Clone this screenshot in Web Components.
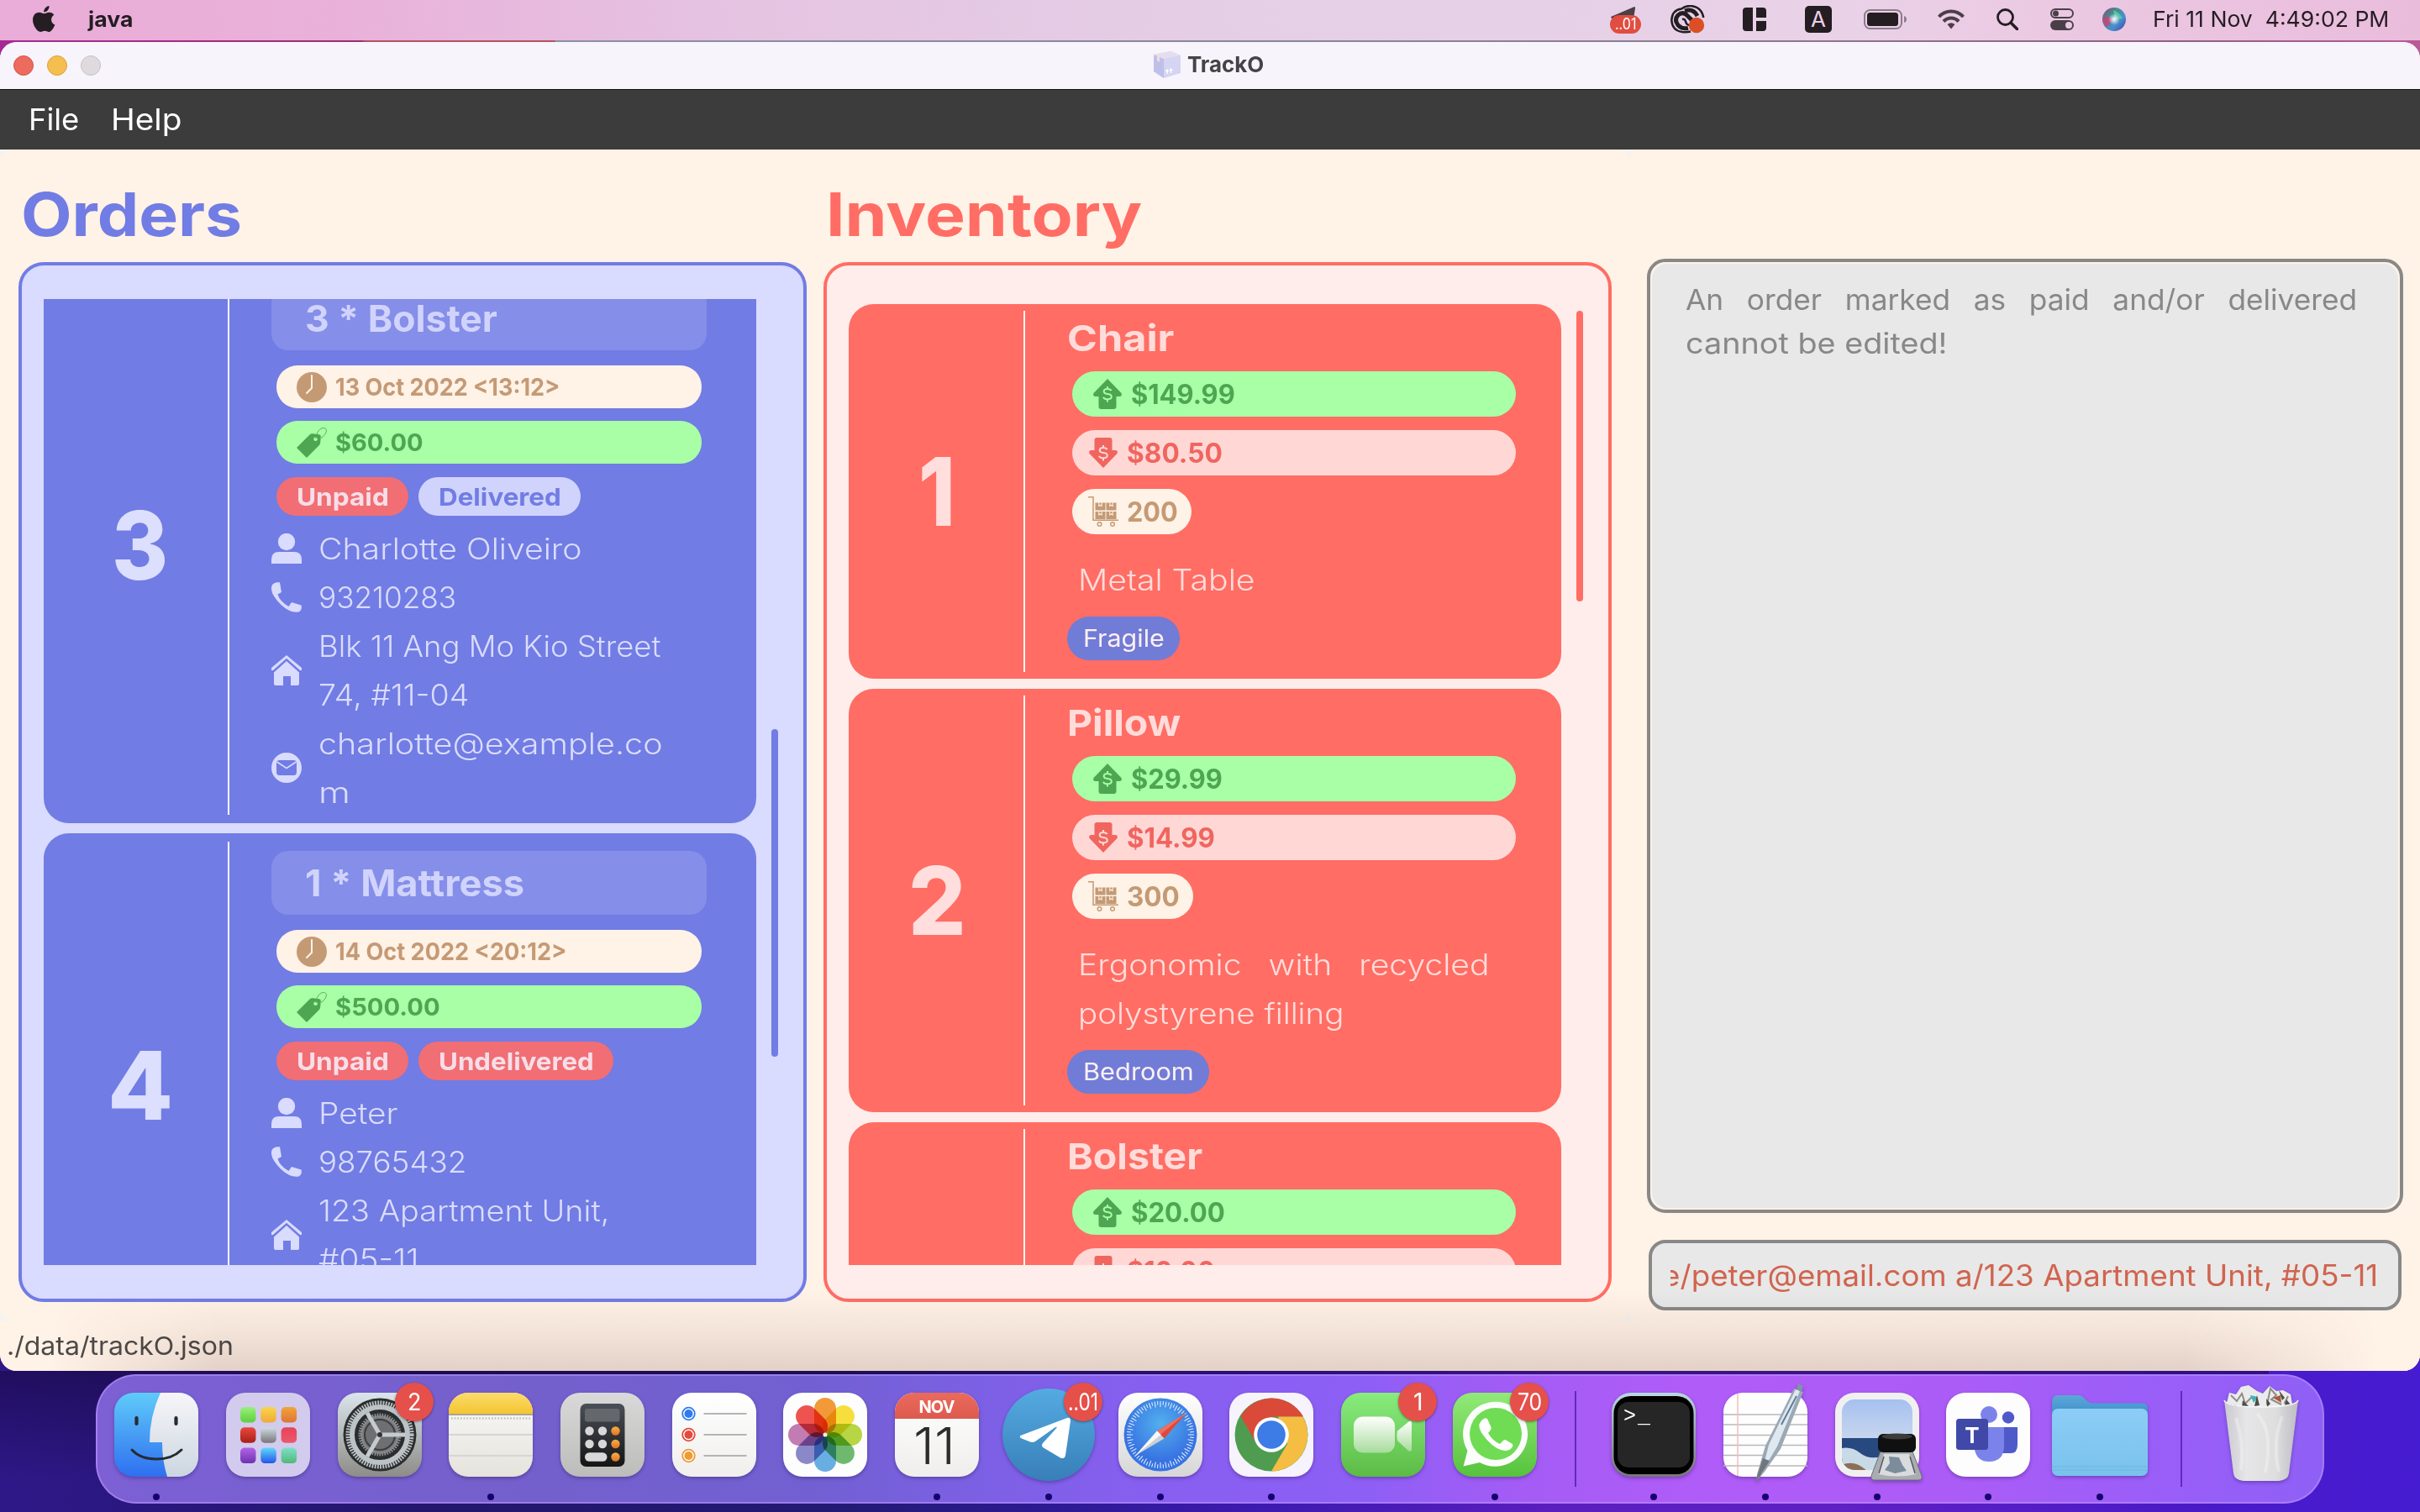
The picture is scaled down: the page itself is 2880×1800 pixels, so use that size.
<!DOCTYPE html>
<html lang="en">
<head>
<meta charset="utf-8">
<title>TrackO</title>
<style>
html,body{margin:0;padding:0}
body{width:2880px;height:1800px;overflow:hidden;font-family:Inter,"Liberation Sans",sans-serif;background:#2a1580}
</style>
</head>
<body>
<desk-top></desk-top>
<script>
const define = (name, html, after) => customElements.define(name, class extends HTMLElement {
  constructor() {
    super();
    this.attachShadow({mode: "open"});
  }
  connectedCallback() {
    if (this.shadowRoot.childNodes.length) return;
    const t = document.createElement("template");
    t.innerHTML = typeof html === "function" ? html(this) : html;
    this.shadowRoot.append(t.content.cloneNode(true));
    customElements.upgrade(this.shadowRoot);
    if (after) after(this);
  }
});
const a = (el, n, d = "") => el.getAttribute(n) ?? d;

/* One line of text stretched or condensed so that it spans a given width.
   With "first", the first word gets that width and the word gaps take up the rest. */
define("fit-text", `<style>
:host{display:block;white-space:nowrap;flex:none}
span{display:inline-block;white-space:pre;transform-origin:0 50%}
</style><span><slot></slot></span>`, el => {
  const span = el.shadowRoot.querySelector("span");
  const fs = parseFloat(getComputedStyle(el).fontSize);
  const w = +a(el, "w"), text = el.textContent, bear = 0.09 * fs;
  if (!w) return;
  const nat = span.getBoundingClientRect().width;
  const first = +a(el, "first");
  let k;
  if (first) {
    const c = document.createElement("canvas").getContext("2d");
    const cs = getComputedStyle(el);
    c.font = `${cs.fontWeight} ${cs.fontSize} ${cs.fontFamily}`;
    k = first / (c.measureText(text.split(" ")[0]).width - bear);
    span.style.wordSpacing = (w / k + bear - nat) / (text.split(" ").length - 1) + "px";
  } else {
    k = w / (nat - bear);
  }
  el.style.width = w + "px";
  span.style.marginLeft = (-0.03 * fs) + "px";
  span.style.transform = `scaleX(${k})`;
});

const G = {
  person: `<circle cx="18" cy="10" r="10.2"/><path d="M0 36v-5q0-9 9-9h18q9 0 9 9v5z"/>`,
  phone: `<path d="M3 1.500Q6-.3 10 .3L12 12 7.500 14.500Q10 23 20.500 29L24 24 35.500 27.500Q37 33 32.500 35.500 22 37 11.500 27-2 14 .3 5 .8 2.700 3 1.500z"/>`,
  home: `<path d="M18 0 36 15v3h-2L18 3.800 2 18H0v-3z"/><path d="M18 7 33 20.500V34q0 2-2 2h-8V25h-9v11H5q-2 0-2-2V20.500z"/>`,
  mail: `<path fill-rule="evenodd" d="M18 0a18 18 0 1 1 0 36 18 18 0 0 1 0-36zM9.500 9Q6 9 6 12.500V23q0 4 3.500 4h17q3.500 0 3.500-4V12.500Q30 9 26.500 9z"/><path d="m6.500 11 11.500 7.500L29.500 11" fill="none" stroke="currentColor" stroke-width="1.500"/>`,
  clock: `<circle cx="18" cy="18" r="18"/><path d="M18 4v15l-6 6" fill="none" stroke="#fff2e6" stroke-width="2" stroke-linecap="round"/>`,
  tag: `<path fill-rule="evenodd" d="m0 24 15.500-15.500Q17 7 19.500 7.300l7 .9q2.500.3 2.300 2.800l-.6 7q-.2 2-1.500 3.200L12 36zM22.500 11.500a2.300 2.300 0 1 0 .1 0z"/><path d="M23 13c0-7 5-13 9.500-12.500s4 7-3.500 12" fill="none" stroke="currentColor" stroke-width=".9"/>`,
  up: `<path d="M18 0 34.500 17Q36 21 32 21h-3.500v12q0 3-3 3h-15q-3 0-3-3V21H4Q0 21 1.500 17z"/>`,
  down: `<path d="M18 36 34.500 19Q36 15 32 15h-3.500V3q0-3-3-3h-15q-3 0-3 3v12H4Q0 15 1.500 19z"/>`,
  cart: `<path d="M0 .8h6v27.500h30" fill="none" stroke="currentColor" stroke-width="1.500"/><path fill-rule="evenodd" d="M8.500 7.500h12v9h-12zM21.500 7.500h12v9h-12zM8.500 18h12v9h-12zM21.500 18h12v9h-12zM12.300 7.500v5l2.200-1.500 2.200 1.500v-5h-1v3l-1.200-1-1.200 1v-3zM25.300 7.500v5l2.200-1.500 2.200 1.500v-5h-1v3l-1.200-1-1.200 1v-3zM12.300 18v5l2.200-1.500 2.200 1.500v-5h-1v3l-1.200-1-1.200 1v-3zM25.300 18v5l2.200-1.500 2.200 1.500v-5h-1v3l-1.200-1-1.200 1v-3z"/><g fill="none" stroke="currentColor" stroke-width="1.400"><circle cx="13.500" cy="33" r="2.300"/><circle cx="29" cy="33" r="2.300"/></g>`
};
const dollar = bg => `<path d="M22.500 14.200q-1-2.200-4.500-2.200-4.300 0-4.300 3 0 2.600 4.300 3 4.800.5 4.800 3.300 0 3-4.800 3-4 0-5-2.500M18 9v3m0 12.500v3" fill="none" stroke="${bg}" stroke-width="2"/>`;
define("glyph-icon", el => {
  const n = a(el, "name");
  return `<style>:host{display:block;flex:none;width:36px;height:36px}svg{display:block}</style>
<svg width="36" height="36" viewBox="0 0 36 36" fill="currentColor">${G[n]}${n === "up" ? dollar("#a8ffa6") : n === "down" ? dollar("#ffd8d6") : ""}</svg>`;
});

/* ---------- orders ---------- */
define("contact-row", el => `<style>
:host{display:flex;align-items:center;color:#d9dbff;font-size:35px;font-weight:350;line-height:58px}
.t{margin-left:21px;color:#dadcfc}
</style><glyph-icon name="${a(el, "icon")}"></glyph-icon><div class="t"><slot></slot></div>`);

define("info-pill", el => `<style>
:host{display:flex;align-items:center;box-sizing:border-box;font-weight:700}
glyph-icon{margin-right:11px}
</style>${a(el, "icon") ? `<glyph-icon name="${a(el, "icon")}"></glyph-icon>` : ""}<slot></slot>`);

define("order-card", el => {
  const red = a(el, "state") === "Undelivered";
  return `<style>
:host{display:flex;background:#717ce4;border-radius:30px;box-sizing:border-box;width:848px;min-height:602px;flex:none;margin-bottom:12px}
.n{width:219px;display:flex;align-items:center;justify-content:center;color:#dcdffd;font-size:113px;font-weight:800;box-sizing:border-box;padding-left:8px}
.n fit-text{margin-top:-3px}
.line{width:2px;background:#fff;margin:10px 0}
.b{padding:21px 0 8px 50px;display:flex;flex-direction:column}
.item{width:518px;height:76px;box-sizing:border-box;border-radius:20px;background:#858ee8;display:flex;align-items:center;padding-left:41px;font-size:44px;font-weight:700;color:#d0d3fc}
info-pill{height:51px;border-radius:25px;margin-left:6px;width:506px;padding-left:24px;font-size:29px}
.d{background:#fff2e6;margin-top:18px;color:#c49a75}
.p{background:#a8ffa6;margin-top:15px;color:#4ea652}
.s{display:flex;margin:16px 0 10px;gap:12px}
.s info-pill{height:46px;width:auto;padding:0 25px}
.s info-pill+info-pill{margin-left:0}
.r{background:#f16e74;color:#f7dee8}
.v{background:#d0d3fc;color:#717ce4}
</style>
<div class="n"><fit-text w="${a(el, "nw")}">${a(el, "n")}</fit-text></div><div class="line"></div>
<div class="b">
<div class="item"><fit-text w="${a(el, "iw")}">${a(el, "item")}</fit-text></div>
<info-pill class="d" icon="clock"><fit-text w="${a(el, "dw")}">${a(el, "date").replace(/</g, "&lt;").replace(/>/g, "&gt;")}</fit-text></info-pill>
<info-pill class="p" icon="tag"><fit-text w="${a(el, "pw")}">${a(el, "price")}</fit-text></info-pill>
<div class="s"><info-pill class="r"><fit-text w="107">Unpaid</fit-text></info-pill><info-pill class="${red ? "r" : "v"}"><fit-text w="${red ? 182 : 143}">${a(el, "state")}</fit-text></info-pill></div>
<slot></slot>
</div>`;
});

/* ---------- inventory ---------- */
define("stock-card", el => `<style>
:host{display:flex;background:#ff6d64;border-radius:30px;box-sizing:border-box;width:848px;min-height:446px;flex:none;margin-bottom:12px}
.n{width:208px;display:flex;align-items:center;justify-content:center;color:#ffdedd;font-size:113px;font-weight:800}
.line{width:2px;background:#fff;margin:8px 0}
.b{padding:11px 0 22px 50px;display:flex;flex-direction:column;align-items:flex-start}
.name{font-size:43px;font-weight:700;color:#ffdcda;line-height:58px;margin-left:1px}
info-pill{height:54px;border-radius:27px;margin:0 0 16px 6px;width:528px;font-size:32px;padding-left:19px}
.u{background:#a8ffa6;color:#4ea652;padding-left:24px;margin-top:11px}
.w{background:#ffd8d6;color:#f1655f}
.q{background:#fff2e6;color:#c49a75;width:auto;padding-right:18px;margin-bottom:25px}
.desc{font-size:35px;font-weight:350;line-height:58px;color:#ffdcda;margin-left:14px}
.tag{margin-top:15px;height:52px;border-radius:26px;background:#717cd6;color:#fdf0f4;font-size:28px;display:flex;align-items:center;padding:0 20px}
</style>
<div class="n">${a(el, "n") ? `<fit-text w="${a(el, "numw")}">${a(el, "n")}</fit-text>` : ""}</div><div class="line"></div>
<div class="b">
<fit-text class="name" w="${a(el, "nw")}">${a(el, "name")}</fit-text>
<info-pill class="u" icon="up"><fit-text w="${a(el, "uw")}">${a(el, "up")}</fit-text></info-pill>
<info-pill class="w" icon="down"><fit-text w="${a(el, "ww")}">${a(el, "down")}</fit-text></info-pill>
${a(el, "qty") ? `<info-pill class="q" icon="cart"><fit-text w="${a(el, "qw", "58")}">${a(el, "qty")}</fit-text></info-pill>
<div class="desc"><slot></slot></div>
<div class="tag"><fit-text w="${a(el, "tw")}">${a(el, "tag")}</fit-text></div>` : ""}
</div>`);

define("list-panel", el => `<style>
:host{display:block;width:938px;color:var(--c)}
.h{font-size:71px;font-weight:700;height:134px;line-height:155px;box-sizing:border-box;padding-left:5px}
.box{box-sizing:border-box;width:938px;height:1238px;border:4px solid var(--c);border-radius:30px;background:var(--bg);padding:40px 0 0 26px;display:flex}
.view{width:848px;height:1150px;overflow:hidden;display:flex;flex-direction:column}
.in{margin-top:var(--off)}
.bar{width:8px;border-radius:4px;background:var(--c);margin:var(--sy) 0 0 18px;height:var(--sh)}
</style>
<div class="h"><fit-text w="${a(el, "hw")}">${a(el, "heading")}</fit-text></div>
<div class="box"><div class="view"><div class="in"><slot></slot></div></div><div class="bar"></div></div>`);

/* ---------- menu bar ---------- */
define("menu-bar", `<style>
:host{display:flex;height:48px;align-items:center;background:linear-gradient(90deg,#eaacd8 0,#e9b1da 400px,#e5c4e2 900px,#e4cfe6 1500px,#e9d2e8 2200px,#ebcae3 2400px,#eabcdc 2880px);color:#241d22;font-size:26px;line-height:44px;padding:0 38px 2px 39px;box-sizing:border-box}
svg{display:block;flex:none}
.j{font-weight:700;margin:0 0 0 40px;font-size:25px}
.sp{flex:1}
.tg{position:relative}
.bd{position:absolute;left:0;top:11px;width:37px;height:22px;border-radius:11px;background:#e14d40;color:#fff;font-size:18px;line-height:22px;display:flex;justify-content:center}
.A{width:32px;height:32px;border-radius:5px;background:#241d22;color:#e9d2e8;display:flex;align-items:center;justify-content:center;margin-right:38px;font-size:26px;line-height:32px}
</style>
<svg width="27" height="32" viewBox="0 0 27 32"><path fill="#241d22" d="M19.500 0c.4 4-2.700 7.400-6.200 7.500C12.800 4 16 .4 19.500 0zM13.700 9.200c1.500 0 3.200-1.600 6-1.500 2.500.1 4.400 1.200 5.600 3-4.800 3-4 9.700 1 11.700-1 3-4 8.400-7 8.500-2 .1-2.700-1.200-5.200-1.200S11 31 9 31C5.500 31 0 23.500 0 16.800 0 11 3.600 7.900 7.400 7.800c2.600 0 4.800 1.500 6.300 1.400z"/></svg>
<fit-text class="j" w="51">java</fit-text><div class="sp"></div>
<div class="tg" style="margin-right:35px"><svg width="37" height="32" viewBox="0 0 37 32"><path fill="#4a4048" d="M1 13 29 1q1.500 0 1 2l-3 18H14V14L2 15z"/></svg><div class="bd"><fit-text w="24">..01</fit-text></div></div>
<svg width="42" height="34" viewBox="0 0 42 34" style="margin-right:44px"><g fill="none" stroke="#241d22"><path d="M24 31.500Q20 32.500 14 32 2 30.500 1.300 18 2 6 13 4.500 18 .8 24 1q13 1 15.300 14" stroke-width="2.500"/><path d="M21 27.500Q14 29 9 24 4 17.500 9 12q5.500-5 11 .5l6 6" stroke-width="5"/><path d="M17 7q10-3.500 15 6" stroke-width="5"/><path d="M14 17q3-1 4 2.500 1 4 4 4.500" stroke-width="2.500"/></g><circle cx="31" cy="24" r="9.200" fill="#dc4f26"/></svg>
<svg width="28" height="28" viewBox="0 0 28 28" style="margin-right:46px"><path fill="#241d22" d="M4 0h8v28H4q-4 0-4-4V4q0-4 4-4zM16 0h8q4 0 4 4v8H16zM16 16h12v8q0 4-4 4h-8z"/></svg>
<div class="A">A</div>
<svg width="52" height="24" viewBox="0 0 52 24" style="margin-right:36px"><rect x="1" y="1" width="44" height="22" rx="6.500" fill="none" stroke="#8b7d8a" stroke-width="2"/><rect x="4" y="4" width="37" height="16" rx="3.500" fill="#241d22"/><path d="M48 8q3 1 3 4t-3 4z" fill="#8b7d8a"/></svg>
<svg width="32" height="24" viewBox="0 0 32 24" style="margin-right:38px"><g fill="none" stroke="#4a3f48" stroke-width="4"><path d="M1.500 9q6-6.500 14.500-6.500T30.500 9"/><path d="M7 14.500q3.800-4 9-4t9 4"/></g><path fill="#4a3f48" d="M11.500 18q4.500-3.500 9 0L16 23.500z"/></svg>
<svg width="26" height="26" viewBox="0 0 26 26" style="margin-right:38px"><circle cx="10.500" cy="10.500" r="9" fill="none" stroke="#241d22" stroke-width="2.800"/><path d="m17 17 7.500 7.500" stroke="#241d22" stroke-width="3.500" stroke-linecap="round"/></svg>
<svg width="28" height="26" viewBox="0 0 28 26" style="margin-right:34px"><rect x="1" y="1" width="26" height="10" rx="5" fill="none" stroke="#4a3f48" stroke-width="2"/><circle cx="6.500" cy="6" r="3.500" fill="#4a3f48"/><rect y="14" width="28" height="12" rx="6" fill="#4a3f48"/><circle cx="22" cy="20" r="4" fill="#ebc8e2"/></svg>
<svg width="28" height="28" viewBox="0 0 28 28" style="margin-right:33px"><defs><linearGradient id="s" x2="1" y2="1"><stop stop-color="#a03a86"/><stop offset=".35" stop-color="#3f8f8c"/><stop offset=".65" stop-color="#4a8fd0"/><stop offset="1" stop-color="#3a3f9a"/></linearGradient><radialGradient id="r"><stop stop-color="#fff"/><stop offset="1" stop-color="#fff" stop-opacity="0"/></radialGradient></defs><circle cx="14" cy="14" r="14" fill="url(#s)"/><path d="M1 12q6-3 12 2-4 7-9 9-4-5-3-11z" fill="#cf3f7a" opacity=".8"/><path d="M13 3q8 3 11 10l-9 1z" fill="#5fd0a8" opacity=".8"/><circle cx="14" cy="14" r="7" fill="url(#r)"/></svg>
<fit-text w="279">Fri 11 Nov&nbsp; 4:49:02 PM</fit-text>`);

/* ---------- application window ---------- */
define("app-window", `<style>
:host{display:flex;flex-direction:column;height:1582px;border-radius:20px;overflow:hidden;background:#f3f3f3;position:relative}
.title{height:56px;background:#f8f4fb;border-bottom:1px solid #17151a;display:flex;align-items:center;box-sizing:border-box;height:57px;padding-bottom:3px;justify-content:center;position:relative}
.lights{position:absolute;left:16px;top:16px;display:flex;gap:16px}
.lights i{width:24px;height:24px;border-radius:50%;box-sizing:border-box;border:1px solid #d35548;background:#ed6a5e}
.lights i+i{background:#f5bf4f;border-color:#d8a03c}
.lights i+i+i{background:#dedade;border-color:#c5c1c5}
.title svg{margin-left:-4px}
.title fit-text{font-size:26px;font-weight:700;color:#454347;margin-left:9px}
.menu{height:71px;background:#3c3c3c;color:#fff;display:flex;align-items:center;padding:0 0 2px 35px;box-sizing:border-box;gap:41px;font-size:36px}
.main{flex:1;display:flex;background:linear-gradient(#fff2e6,#fff2e6) right/940px 100% no-repeat}
.left{width:1940px;height:1394px;background:#fff2e6;border-radius:14px;display:flex;padding-left:22px;gap:20px;box-sizing:border-box}
.right{padding:130px 0 0 20px;display:flex;flex-direction:column}
.res{width:900px;height:1136px;box-sizing:border-box;border:4px solid #888;border-radius:22px;background:#fff2e6;padding:2px}
.res div{height:100%;border-radius:18px;background:#e8e8e8;box-sizing:border-box;padding:17px 0 0 41px;font-size:34px;line-height:52px;color:#888}
.cmd{margin:32px 0 0 2px;width:896px;height:84px;box-sizing:border-box;border:4px solid #888;border-radius:20px;background:#e8e8e8;display:flex;align-items:center;padding:0 22px;font-size:35px;color:#d0644f}
.cmd div{overflow:hidden;flex:1;display:flex;line-height:60px}
.cmd fit-text{margin-left:-9px}
.status{height:60px;display:flex;align-items:center;margin-top:-60px;padding-left:9px;font-size:30px;color:#4c4a48;box-sizing:border-box;position:relative;background:#fff2e6}
.shade{position:absolute;left:0;right:0;bottom:0;height:96px;background:linear-gradient(transparent,rgba(70,25,30,.055) 45%,rgba(70,25,30,.15));-webkit-mask-image:linear-gradient(90deg,transparent 60px,#000 260px,#000 2600px,transparent 2830px);mask-image:linear-gradient(90deg,transparent 60px,#000 260px,#000 2600px,transparent 2830px)}
</style>
<div class="title"><div class="lights"><i></i><i></i><i></i></div>
<svg width="32" height="32" viewBox="0 0 32 32"><path d="M0 4 20 0l12 5v21l-20 6L0 24z" fill="#d5d4f3"/><path d="m0 4 12 5v23L0 24z" fill="#bfc0ea"/><path d="M0 4 20 0l12 5-20 4z" fill="#dfdff6"/><path d="m4 5.500 20-4 3 1.300-20 4v6l-3-1.500z" fill="#f5d9dd"/><path d="M16 27v-5m-1.500 2 1.500-2 1.500 2M20.500 26v-5m-1.500 2 1.500-2 1.500 2" stroke="#fff" stroke-width="1.300" fill="none"/></svg>
<fit-text w="89">TrackO</fit-text></div>
<div class="menu"><fit-text w="57">File</fit-text><fit-text w="81">Help</fit-text></div>
<div class="main"><div class="left">
<list-panel heading="Orders" hw="256" style="--c:#717ce4;--bg:#d9dbff;--off:-36px;--sy:512px;--sh:390px">
<order-card n="3" nw="58" item="3 * Bolster" iw="225" date="13 Oct 2022 <13:12>" dw="265" price="$60.00" pw="102" state="Delivered">
<contact-row icon="person"><fit-text w="310">Charlotte Oliveiro</fit-text></contact-row>
<contact-row icon="phone"><fit-text w="161">93210283</fit-text></contact-row>
<contact-row icon="home"><fit-text w="404">Blk 11 Ang Mo Kio Street</fit-text><fit-text w="176">74, #11-04</fit-text></contact-row>
<contact-row icon="mail"><fit-text w="406">charlotte@example.co</fit-text><fit-text w="34">m</fit-text></contact-row>
</order-card>
<order-card n="4" nw="68" item="1 * Mattress" iw="257" date="14 Oct 2022 <20:12>" dw="273" price="$500.00" pw="122" state="Undelivered">
<contact-row icon="person"><fit-text w="91">Peter</fit-text></contact-row>
<contact-row icon="phone"><fit-text w="173">98765432</fit-text></contact-row>
<contact-row icon="home"><fit-text w="343">123 Apartment Unit,</fit-text><fit-text w="116">#05-11</fit-text></contact-row>
</order-card>
</list-panel>
<list-panel heading="Inventory" hw="369" style="--c:#ff6d64;--bg:#ffedeb;--off:6px;--sy:14px;--sh:346px">
<stock-card n="1" numw="35" name="Chair" nw="123" up="$149.99" uw="121" down="$80.50" ww="111" qty="200" tag="Fragile" tw="94"><fit-text w="207">Metal Table</fit-text></stock-card>
<stock-card n="2" numw="59" name="Pillow" nw="131" up="$29.99" uw="106" down="$14.99" ww="102" qty="300" qw="60" tag="Bedroom" tw="129"><fit-text w="486" first="191">Ergonomic with recycled</fit-text><fit-text w="313">polystyrene filling</fit-text></stock-card>
<stock-card name="Bolster" nw="157" up="$20.00" uw="109" down="$10.00" ww="102"></stock-card>
</list-panel>
</div><div class="right">
<div class="res"><div><fit-text w="796" first="42">An order marked as paid and/or delivered</fit-text><fit-text w="308">cannot be edited!</fit-text></div></div>
<div class="cmd"><div><fit-text w="849">e/peter@email.com a/123 Apartment Unit, #05-11</fit-text></div></div>
</div></div>
<div class="status"><fit-text w="267">./data/trackO.json</fit-text></div>
<div class="shade"></div>`);

/* ---------- dock ---------- */
const range = (n, f) => Array.from({length: n}, (_, i) => f(i)).join("");
const sq = (fill, o = "") => `<rect width="100" height="100" rx="23" fill="${fill}" ${o}/>`;
const lg = (id, c1, c2, x = "") => `<linearGradient id="${id}" x2="0" y2="1" ${x}><stop stop-color="${c1}"/><stop offset="1" stop-color="${c2}"/></linearGradient>`;
const APPS = {
finder: `<defs>${lg("a", "#5fcbf9", "#2f6ff0")}${lg("b", "#f7f6fa", "#ccd6e0")}<clipPath id="c"><rect width="100" height="100" rx="23"/></clipPath></defs><g clip-path="url(#c)"><rect width="100" height="100" fill="url(#a)"/><path d="M55 0Q42 28 42 59h15q0 22 6 41h37V0z" fill="url(#b)"/></g><g stroke="#262b33" stroke-linecap="round" fill="none"><path d="M26.500 30v7M73.500 30v7" stroke-width="4.200"/><path d="M21 68q10 11 29 11t30-11" stroke-width="3"/></g>`,
launch: `${sq("#d2cbed")}${[["#9af07a", "#5ccf3e"], ["#f9d54a", "#f0a93c"], ["#f0a53a", "#de7436"], ["#e8483c", "#a81f18"], ["#cfdbe4", "#767676"], ["#e8425c", "#ea5a68"], ["#b263e6", "#6f31b0"], ["#5ed8fa", "#2455e8"], ["#7fdfc8", "#4fb878"]].map((c, i) => `<defs>${lg("l" + i, c[0], c[1])}</defs><rect x="${17 + i % 3 * 24.300}" y="${17 + (i / 3 | 0) * 24.300}" width="18.500" height="18.500" rx="5" fill="url(#l${i})"/>`).join("")}`,
settings: `<defs>${lg("g", "#dbe5ec", "#8d8c88")}</defs>${sq("url(#g)")}<circle cx="50" cy="50" r="43.500" fill="#2b2d2e"/><circle cx="50" cy="50" r="38" fill="none" stroke="#b9bfc2" stroke-width="5" stroke-dasharray="1.900 1.300"/><circle cx="50" cy="50" r="33" fill="none" stroke="#bcc3c6" stroke-width="6"/><circle cx="50" cy="50" r="23" fill="#77797a" stroke="#8d9193" stroke-width="5" stroke-dasharray="1.600 1.300"/><circle cx="50" cy="50" r="18" fill="#6d6f70" stroke="#3b3d3e" stroke-width="2"/><path d="M50 50h30M50 50 35 24M50 50 35 76" stroke="#c5cbce" stroke-width="5"/><circle cx="50" cy="50" r="3" fill="#333"/>`,
notes: `<defs>${lg("n", "#f9f9f8", "#e4e3dc")}${lg("m", "#fbdc6c", "#f4c431")}<clipPath id="c"><rect width="100" height="100" rx="23"/></clipPath></defs><g clip-path="url(#c)"><rect width="100" height="100" fill="url(#n)"/><rect width="100" height="25" fill="url(#m)"/><path d="M0 26h100" stroke="#a9a692" stroke-width="2"/><path d="M3 30.500h96" stroke="#b5b4b2" stroke-width="2" stroke-dasharray="1.500 2.200"/><path d="M0 50h100M0 75h100" stroke="#cfcecd" stroke-width="1.600"/></g>`,
calc: `<defs>${lg("n", "#d9d9d9", "#bcbcba")}${lg("k", "#4a5058", "#151515")}${lg("o", "#f7ad4c", "#e0761e")}</defs>${sq("url(#n)")}<rect x="23.500" y="13" width="53" height="75" rx="7" fill="url(#k)"/><rect x="29" y="19" width="41.500" height="15.500" rx="3" fill="#64686d"/>${[45.500, 61, 76.500].map((y, r) => (r < 2 ? `<circle cx="34.500" cy="${y}" r="5.200" fill="#d8d8d8"/><circle cx="50" cy="${y}" r="5.200" fill="#d8d8d8"/>` : `<rect x="29" y="71.300" width="26.500" height="10.500" rx="5.200" fill="#d8d8d8"/>`) + `<circle cx="65.500" cy="${y}" r="5.200" fill="url(#o)"/>`).join("")}`,
remind: `<defs>${lg("n", "#ffffff", "#f0efed")}</defs>${sq("url(#n)")}${["#2f7bf0", "#e64a3c", "#ee9a35"].map((c, i) => `<g transform="translate(19.500 ${25 + i * 25})"><circle r="7.300" fill="#fff" stroke="${c}" stroke-width="1.800"/><circle r="5" fill="${c}"/></g><path d="M37.500 ${25 + i * 25}h51" stroke="#b4b4b7" stroke-width="1.800"/>`).join("")}`,
photos: `${sq("#fdfdfd")}<g style="isolation:isolate">${["#f19a37", "#f6df3c", "#b8d543", "#6fb96f", "#69aee2", "#8a88c6", "#c27cb2", "#ee5350"].map((c, i) => `<rect x="37" y="6" width="26" height="43" rx="13" fill="${c}" transform="rotate(${i * 45} 50 50)" style="mix-blend-mode:multiply"/>`).join("")}</g><circle cx="50" cy="50" r="2.500" fill="#eee"/>`,
cal: `<defs>${lg("n", "#ffffff", "#efeeec")}${lg("m", "#ea6b5e", "#dc5a4d")}<clipPath id="c"><rect width="100" height="100" rx="23"/></clipPath></defs><g clip-path="url(#c)"><rect width="100" height="100" fill="url(#n)"/><rect width="100" height="31" fill="url(#m)"/></g><text x="50" y="23.500" text-anchor="middle" font-size="20" font-weight="700" fill="#fff" textLength="43">NOV</text><text x="47" y="85" text-anchor="middle" font-size="61" font-weight="300" fill="#2c2c2c" textLength="50" lengthAdjust="spacingAndGlyphs">11</text>`,
tele: `<defs>${lg("n", "#55aae2", "#387fb8")}</defs><circle cx="50" cy="50" r="55" fill="url(#n)"/><path d="M16.500 51Q14.500 53 18 54.500l10 4q3 1 6-.5L58 41q3-1 1 1.500L43 60q-2 2.500 0 5l21 12.500q5 2 6-3l6-41q0-5-4-3.500z" fill="#fff"/>`,
safari: `<defs>${lg("n", "#ffffff", "#d6d6d6")}<radialGradient id="m" cy=".35"><stop stop-color="#52b0ee"/><stop offset="1" stop-color="#3873e2"/></radialGradient></defs>${sq("url(#n)")}<circle cx="50" cy="50" r="43.500" fill="url(#m)"/>${range(72, i => `<path d="M50 ${10}v${i % 2 ? 4.500 : 7}" stroke="#dcebfa" stroke-width="1.100" transform="rotate(${i * 5} 50 50)"/>`)}<path d="M81 24 54.500 54.500 46 45.500z" fill="#e0483c"/><path d="M81 24 50 50l-4-4.500z" fill="#ee6f64"/><path d="m20 75 26-29.500 8.500 9z" fill="#ccd0d4"/><path d="M20 75 46 45.500l4.500 4.500z" fill="#f8f8f8"/>`,
chrome: `<rect width="100" height="100" rx="23" fill="#f6f3fc"/><circle cx="50" cy="50" r="43.500" fill="#4f9c51"/><path d="M50 6.500A43.500 43.500 0 0 0 13.500 28L31 58 50 28.500h38A43.500 43.500 0 0 0 50 6.500z" fill="#d94a39"/><path d="M87.500 28.500A43.500 43.500 0 0 1 50 93.500L69 61 58 28.500z" fill="#f5bd41"/><circle cx="50" cy="50" r="20.800" fill="#fff"/><circle cx="50" cy="50" r="16.800" fill="#3d7be6"/>`,
face: `<defs>${lg("n", "#88ec7e", "#5cbb45")}${lg("m", "#ffffff", "#a8dc9d")}</defs>${sq("url(#n)")}<rect x="15" y="28.500" width="49" height="43" rx="11" fill="url(#m)"/><path d="M67 45.500 81 34q3-1.500 3 2v31q0 4-4 2L68 58q-1.500-1-1.500-6t.5-6.500z" fill="url(#m)"/>`,
whats: `<defs>${lg("n", "#92ea78", "#56c33c")}</defs>${sq("url(#n)")}<path d="M12.500 87.500 17.500 69A38.500 38.500 0 1 1 32 83z" fill="#fbfdfb"/><circle cx="51" cy="49" r="31" fill="#6fdc54"/><path d="M36 31.500q4-2.500 5.500.5l4 9q.5 2-1 4l-2.500 3q5 9 14 13l4-4q1.500-1.500 3.500-.5l6.500 4q2 1 1 3.500-2 4.500-8 5-10 .5-22-12.500-11-12-9.500-19 1.500-4 4.500-6z" fill="#fff"/>`,
term: `<defs>${lg("n", "#b8d8e0", "#777")}</defs>${sq("url(#n)")}<rect x="2.500" y="4" width="95" height="93" rx="20" fill="#000"/><rect x="7" y="11" width="86" height="78" rx="13" fill="#262626"/><text x="14" y="35" font-size="25" font-weight="500" fill="#fff" font-family="Liberation Mono,monospace" textLength="32">&gt;_</text>`,
edit: `${sq("#fdfdfd")}<path d="M0 26h100M0 38h100M0 50.500h100M0 62.500h100M0 74.500h100M0 87h100" stroke="#b9b9bb" stroke-width="1.300"/><path d="M17 1v98" stroke="#f2bfc0" stroke-width="1.500"/><path d="m84-5 11 4-27 68-19 27-10 12 1-9 10-34z" fill="#9ba8b5"/><path d="m86-4 5 2-27 66-12 20-7 14 9-36z" fill="#dfe8ef"/><path d="m47 78 8 3-15 24-2 1z" fill="#6f767e"/><path d="M89-11l6 3-2 7-6-3z" fill="#7d95a8"/><path d="m87 4-18 34" stroke="#5b7f9c" stroke-width="2"/>`,
preview: `<defs>${lg("n", "#a0bdf0", "#c7d6ee")}<clipPath id="c"><rect x="8" y="8" width="84" height="84" rx="15"/></clipPath></defs>${sq("#f1f0f0")}<g clip-path="url(#c)"><rect width="100" height="55" fill="url(#n)"/><rect y="54" width="100" height="46" fill="#27497f"/><path d="M8 66q12-2 22 6t25 4v20H8z" fill="#c8dae8"/><path d="M8 86q15-7 30 7H8z" fill="#8d6f55"/></g><path d="M54 70h38l11 29q1 5-4 5H47q-5 0-4-5z" fill="#a9adb2" stroke="#6b6f74" stroke-width="1"/><path d="M58 73h30l8 24q-22 5-45 0z" fill="#d9dcde"/><path d="m64 76 12 1 4 9 5 7-14 3-12-4 6-8z" fill="#7d8c9a"/><path d="m52 96 6-20M95 96l-6-20" stroke="#55595e" stroke-width="1.500"/><rect x="51" y="49" width="45" height="22" rx="6" fill="#101010"/><ellipse cx="73.500" cy="52" rx="18" ry="3.500" fill="#3c3c3c"/>`,
teams: `${sq("#fdfdfd")}<circle cx="51" cy="26" r="10" fill="#7b83eb"/><circle cx="74" cy="29.500" r="7.200" fill="#5059c9"/><path d="M50 41h35v21q0 10-8 10H63z" fill="#5059c9"/><path d="M35 41h34v22q0 19-18 19-14 0-17-14z" fill="#7b83eb"/><rect x="12" y="31" width="38" height="37" rx="3.500" fill="#4049a8"/><text x="31" y="59.500" text-anchor="middle" font-size="26" font-weight="700" fill="#fff">T</text>`,
folder: `<defs>${lg("n", "#8ccdf7", "#79c2ec")}${lg("m", "#5ba8d8", "#2e80c4")}</defs><path d="M-7 12q0-9 7-9h24q4 0 7 3l4 4q3 2.500 7 2.500h59q6 0 6 6V40H-7z" fill="url(#m)"/><rect x="-7" y="19" width="114" height="80" rx="7" fill="url(#n)"/><path d="M-7 88h114M-7 92h114" stroke="#6cb6e2" stroke-width="1"/>`,
trash: `<defs><linearGradient id="n"><stop stop-color="#c9c9cf"/><stop offset=".3" stop-color="#e6e6e8"/><stop offset=".7" stop-color="#dededf"/><stop offset="1" stop-color="#bcbcc4"/></linearGradient></defs><path d="M9 12 12 0l8 2 6-9 9-2 10 7 7 3 8-9 8 6 8-1 9 5 2 12-40 8z" fill="#ebebeb"/><path d="m14 3 7 7 6-9 4 12 8-8M57 14 61-5l7 8-6 5 12 6M82 4l-4 8 8 3" fill="none" stroke="#8f8c89" stroke-width="2"/><path d="m37 3 9 2-5 7z" fill="#3fb3b8"/><path d="m64 6 9-3 1 9z" fill="#a8583c"/><path d="m28 9 8 8h-9zM45 3l3 12-6 1zM56 7l5 6-4 4zM71-3l7 9-3 3zM80 8l4 5-6 2z" fill="#4e4b48"/><path d="M6 9q2 8 44 8T94 9L83 96q-1 8-12 9H29q-11-1-12-9z" fill="url(#n)"/><path d="M6 9q3 8 44 8t44-8" fill="none" stroke="#f8f8f8" stroke-width="1.500"/><path d="M20 30q10 30 6 62M45 25q20 20 10 70M75 28q-12 30-4 66" stroke="#fff" stroke-width="4" fill="none" opacity=".3"/>`
};
define("dock-app", el => `<style>
:host{display:flex;flex-direction:column;align-items:center;width:132.700px;flex:none;position:relative}
svg{display:block;overflow:visible;margin-top:20px;filter:drop-shadow(0 2px 2px rgba(20,0,60,.3))}
.dot{width:8px;height:8px;border-radius:4px;background:#160070;margin-top:20px}
.b{position:absolute;top:8px;right:2px;min-width:46px;height:46px;box-sizing:border-box;padding:0 5px;border-radius:23px;background:#e5504a;color:#fff;font-size:28px;line-height:46px;display:flex;justify-content:center;box-shadow:0 1px 3px rgba(0,0,0,.4)}
</style><svg width="100" height="100" viewBox="0 0 100 100">${APPS[a(el, "app")]}</svg>${el.hasAttribute("on") ? `<div class="dot"></div>` : ""}${a(el, "badge") ? `<div class="b"><fit-text w="${a(el, "bw")}">${a(el, "badge")}</fit-text></div>` : ""}`);

define("dock-bar", `<style>
:host{display:flex;box-sizing:border-box;width:2652px;height:154px;border-radius:48px;margin:0 auto 0 114px;border:2px solid rgba(190,150,255,.55);padding-left:4px;background:linear-gradient(90deg,#7c60d4,#7460cc 500px,#7260d2 850px,#7c60e4 1050px,#875ff0 1250px,#8d5ff5 1500px,#a45cf5 1700px,#b05cf8 1900px,#ac5cf6 2200px,#9a5ef8 2450px,#8f60f6)}
.sep{width:2px;background:rgba(70,20,160,.7);margin:18px 26px 18px 29px}
.s2{margin:18px 27px 18px 30px}
</style>
<dock-app app="finder" on></dock-app><dock-app app="launch"></dock-app><dock-app app="settings" badge="2" bw="14"></dock-app><dock-app app="notes" on></dock-app><dock-app app="calc"></dock-app><dock-app app="remind"></dock-app><dock-app app="photos"></dock-app><dock-app app="cal" on></dock-app><dock-app app="tele" on badge="..01" bw="34"></dock-app><dock-app app="safari" on></dock-app><dock-app app="chrome" on></dock-app><dock-app app="face" badge="1" bw="9"></dock-app><dock-app app="whats" on badge="70" bw="27"></dock-app>
<div class="sep"></div>
<dock-app app="term" on></dock-app><dock-app app="edit" on></dock-app><dock-app app="preview" on></dock-app><dock-app app="teams" on></dock-app><dock-app app="folder" on></dock-app>
<div class="sep s2"></div>
<dock-app app="trash"></dock-app>`);

define("desk-top", `<style>
:host{display:flex;flex-direction:column;width:2880px;height:1800px;overflow:hidden;background:
linear-gradient(90deg,#a32a93,#9c2f6e 430px,#b5505f 435px,#b5505f 660px,#8a90a8 661px,#8d7d90 2000px,#8f6080 2600px,#b85a98) 0 0/100% 140px no-repeat,
linear-gradient(rgba(15,0,40,.42),transparent 130px) 0 1632px/2700px 168px no-repeat,
linear-gradient(90deg,#2e1888,#23166c 500px,#231a74 1000px,#2c1a92 1250px,#3d1ab0 1500px,#5a1ebe 1850px,#5f20c4 2200px,#4a1ac6 2600px,#461cd2)}
app-window{margin:2px 0 4px}
</style><menu-bar></menu-bar><app-window></app-window><dock-bar></dock-bar>`);
</script>
</body>
</html>
